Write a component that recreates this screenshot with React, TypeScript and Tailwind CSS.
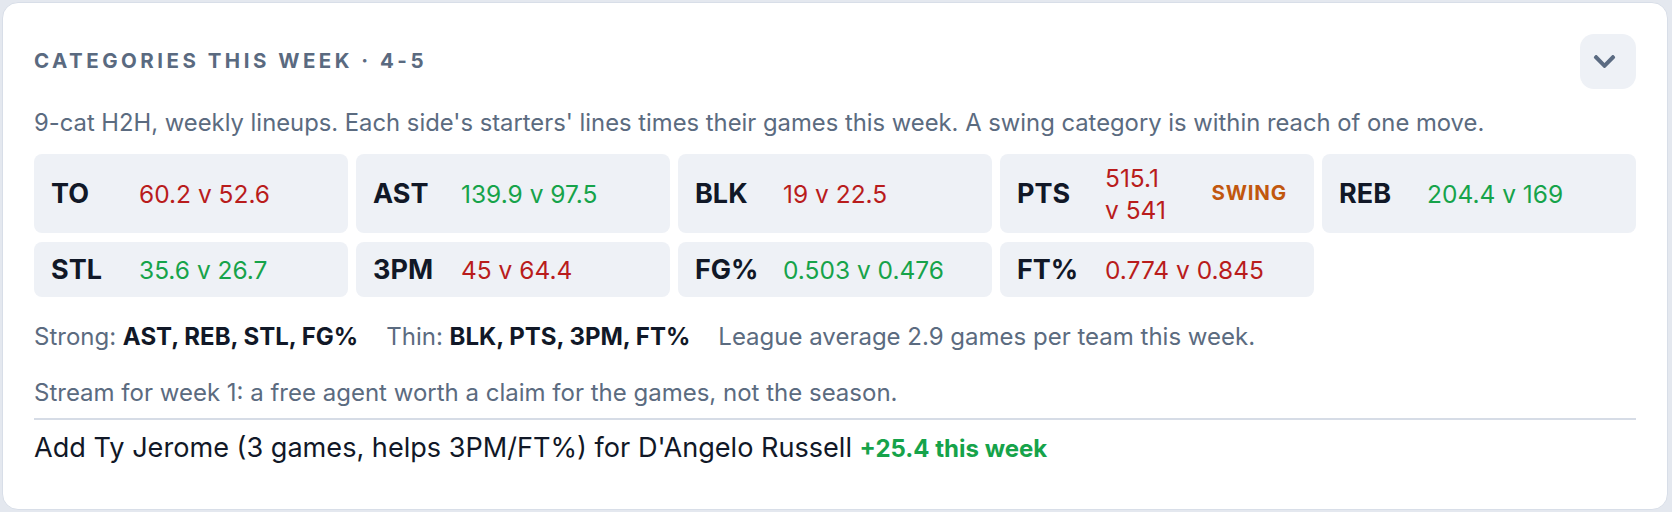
import { FaChevronDown } from "react-icons/fa";

type Cat = { label: string; value: string; good: boolean; swing?: boolean };

const CATS: Cat[] = [
  { label: "TO",  value: "60.2 v 52.6",   good: false },
  { label: "AST", value: "139.9 v 97.5",  good: true },
  { label: "BLK", value: "19 v 22.5",     good: false },
  { label: "PTS", value: "515.1 v 541",   good: false, swing: true },
  { label: "REB", value: "204.4 v 169",   good: true },
  { label: "STL", value: "35.6 v 26.7",   good: true },
  { label: "3PM", value: "45 v 64.4",     good: false },
  { label: "FG%", value: "0.503 v 0.476", good: true },
  { label: "FT%", value: "0.774 v 0.845", good: false },
];

function CatCell({ c }: { c: Cat }) {
  return (
    <div className="flex items-center gap-4 min-h-[55px] rounded-lg bg-[#eef1f6] px-[17px] py-[7.5px]">
      <span className="w-[72px] shrink-0 text-[27px] leading-8 font-bold text-[#111827]">{c.label}</span>
      <span className={`flex-1 min-w-0 text-[24.5px] leading-8 ${c.good ? "text-[#16a34a]" : "text-[#b91c1c]"}`}>{c.value}</span>
      {c.swing && <span className="ml-4 pr-[10px] text-[20.5px] font-bold tracking-[0.04em] text-[#c1570e]">SWING</span>}
    </div>
  );
}

export default function App() {
  return (
    <div className="min-h-screen bg-[#e4e8ef] pt-[2px] pl-[2px] pr-[4px]" style={{ fontFamily: "Inter, 'Noto Sans', sans-serif" }}>
      <div className="rounded-2xl border border-[#d8dee8] bg-white px-[31px] pt-[31px] pb-[44px]">
        <div className="flex items-center justify-between">
          <h2 className="text-[20.5px] font-bold uppercase tracking-[0.17em] text-[#5a6a80]">Categories this week · 4-5</h2>
          <button className="flex h-[55px] w-[56px] items-center justify-center rounded-[14px] bg-[#eef1f6] pr-2 text-[#5b6b82]">
            <FaChevronDown size={25} />
          </button>
        </div>

        <p className="mt-5 text-[23.8px] leading-7 text-[#5b6b80]">
          9-cat H2H, weekly lineups. Each side's starters' lines times their games this week. A swing category is within reach of one move.
        </p>

        <div className="mt-[17px] grid grid-cols-5 gap-x-2 gap-y-[9px]">
          {CATS.map(c => <CatCell key={c.label} c={c} />)}
        </div>

        <div className="mt-[26px] flex flex-wrap gap-x-7 text-[24px] leading-7 text-[#5b6b80]">
          <span>Strong: <b className="font-bold text-[#111827]">AST, REB, STL, FG%</b></span>
          <span>Thin: <b className="font-bold text-[#111827]">BLK, PTS, 3PM, FT%</b></span>
          <span>League average 2.9 games per team this week.</span>
        </div>

        <p className="mt-7 border-b-2 border-[#d6dce6] pb-[11px] text-[24px] leading-7 text-[#5b6b80]">
          Stream for week 1: a free agent worth a claim for the games, not the season.
        </p>

        <p className="pt-3 text-[27.1px] leading-8 text-[#111827]">
          Add Ty Jerome (3 games, helps 3PM/FT%) for D'Angelo Russell{" "}
          <span className="text-[24px] font-bold text-[#16a34a]">+25.4 this week</span>
        </p>
      </div>
    </div>
  );
}
